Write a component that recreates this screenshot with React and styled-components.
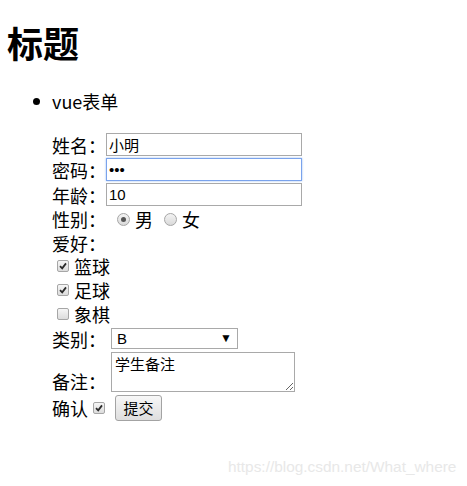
import React from 'react';
import styled, { createGlobalStyle } from 'styled-components';

const GlobalStyle = createGlobalStyle`
    body {
        margin: 0;
        background: #fff;
        color: #000;
        font-family: "Noto Sans CJK SC", "Liberation Sans", sans-serif;
    }
`;

const Page = styled.div`
    position: relative;
    width: 467px;
    height: 486px;
    padding: 20px 0 0 7px;
    box-sizing: border-box;
    overflow: hidden;
`;

const Title = styled.h1`
    margin: 0;
    font-size: 36px;
    line-height: 44px;
    font-weight: 700;
`;

const List = styled.ul`
    margin: 24px 0 0;
    padding-left: 45px;
    list-style: none;
`;

const Item = styled.li`
    position: relative;
    font-size: 18px;
    line-height: 26px;

    &::before {
        content: "";
        position: absolute;
        left: -19px;
        top: 10px;
        width: 7px;
        height: 7px;
        border-radius: 50%;
        background: #000;
    }
`;

const Form = styled.form`
    margin-top: 18px;
    display: flex;
    flex-direction: column;
`;

const Row = styled.div`
    display: flex;
    align-items: ${({ $align }) => $align || 'center'};
    height: ${({ $h }) => $h}px;
    font-size: 18px;
    line-height: 22px;
`;

const Label = styled.span`
    white-space: nowrap;
`;

const TextInput = styled.input`
    box-sizing: border-box;
    width: 196px;
    height: 23px;
    margin: 0;
    padding: 1px 2px;
    border: 1px solid ${({ $focused }) => ($focused ? '#7aa3ec' : '#a9a9a9')};
    box-shadow: ${({ $focused }) => ($focused ? '0 0 2px #9dbdf2' : 'none')};
    outline: none;
    font-family: "Liberation Sans", "Noto Sans CJK SC", sans-serif;
    font-size: 15px;
    color: #000;
    background: #fff;
`;

const Radio = styled.span`
    box-sizing: border-box;
    display: inline-flex;
    align-items: center;
    justify-content: center;
    width: 13px;
    height: 13px;
    margin: 0 5px 0 ${({ $ml }) => $ml || 0}px;
    border: 1px solid #a6a6a6;
    border-radius: 50%;
    background: linear-gradient(#f4f4f4, #d9d9d9);

    &::after {
        content: "";
        display: ${({ $checked }) => ($checked ? 'block' : 'none')};
        width: 5px;
        height: 5px;
        border-radius: 50%;
        background: #555;
    }
`;

const Check = styled.span`
    box-sizing: border-box;
    display: inline-flex;
    align-items: center;
    justify-content: center;
    width: 12px;
    height: 12px;
    margin: 0 ${({ $mr }) => $mr ?? 5}px 0 ${({ $ml }) => $ml || 0}px;
    border: 1px solid #a6a6a6;
    border-radius: 2px;
    background: linear-gradient(#f6f6f6, #dcdcdc);
    color: #2b2b2b;
    svg { display: block; }
`;

const SelectBox = styled.div`
    position: relative;
    box-sizing: border-box;
    width: 127px;
    height: 21px;
    margin-left: 5px;
    border: 1px solid #a9a9a9;
    background: #fff;
    padding-left: 5px;
    font-family: "Liberation Sans", sans-serif;
    font-size: 15px;
    line-height: 19px;

    &::after {
        content: "▼";
        position: absolute;
        right: 5px;
        top: 0;
        font-size: 12px;
        line-height: 19px;
    }
`;

const Note = styled.textarea`
    box-sizing: border-box;
    width: 184px;
    height: 40px;
    margin: 0 0 0 5px;
    padding: 1px 3px;
    border: 1px solid #a9a9a9;
    outline: none;
    font-family: "Noto Sans CJK SC", sans-serif;
    font-size: 15px;
    line-height: 20px;
    color: #000;
`;

const Button = styled.button`
    box-sizing: border-box;
    width: 47px;
    height: 26px;
    margin: 0 0 0 ${({ $ml }) => $ml || 0}px;
    padding: 0;
    border: 1px solid #a3a3a3;
    border-radius: 3px;
    background: linear-gradient(#f7f7f7, #dedede);
    font-family: "Noto Sans CJK SC", sans-serif;
    font-size: 15px;
    color: #000;
`;

const Watermark = styled.div`
    position: absolute;
    left: 228px;
    top: 458px;
    font-family: "Liberation Sans", sans-serif;
    font-size: 15.4px;
    color: #e8e8e8;
    white-space: nowrap;
`;

const Tick = () => (
    <svg width="8" height="8" viewBox="0 0 8 8">
        <path d="M1 4.2 L3.2 6.4 L7 1.4" fill="none" stroke="currentColor" strokeWidth="1.8" />
    </svg>
);

const hobbies = [
    { name: '篮球', checked: true },
    { name: '足球', checked: true },
    { name: '象棋', checked: false },
];

const App = () => {
  return (
    <Page>
        <GlobalStyle />
        <Title>标题</Title>
        <List>
            <Item>
                vue表单
                <Form onSubmit={ e => e.preventDefault() }>
                    <Row $h={ 25 }>
                        <Label>姓名：</Label>
                        <TextInput type="text" defaultValue="小明" />
                    </Row>
                    <Row $h={ 25 }>
                        <Label>密码：</Label>
                        <TextInput type="password" defaultValue="123" $focused />
                    </Row>
                    <Row $h={ 25 }>
                        <Label>年龄：</Label>
                        <TextInput type="text" defaultValue="10" />
                    </Row>
                    <Row $h={ 24 }>
                        <Label>性别：</Label>
                        <Radio $ml={ 11 } $checked />男
                        <Radio $ml={ 11 } />女
                    </Row>
                    <Row $h={ 23 }>
                        <Label>爱好：</Label>
                    </Row>
                    {
                        hobbies.map(h => (
                            <Row $h={ 24 } key={ h.name }>
                                <Check $ml={ 5 }>{ h.checked && <Tick /> }</Check>{ h.name }
                            </Row>
                        ))
                    }
                    <Row $h={ 25 }>
                        <Label>类别：</Label>
                        <SelectBox>B</SelectBox>
                    </Row>
                    <Row $h={ 41 } $align="flex-end">
                        <Label>备注：</Label>
                        <Note defaultValue="学生备注" />
                    </Row>
                    <Row $h={ 31 }>
                        <Label>确认</Label>
                        <Check $ml={ 5 } $mr={ 0 }><Tick /></Check>
                        <Button type="button" $ml={ 10 }>提交</Button>
                    </Row>
                </Form>
            </Item>
        </List>
        <Watermark>https://blog.csdn.net/What_where</Watermark>
    </Page>
  );
};

export default App;
